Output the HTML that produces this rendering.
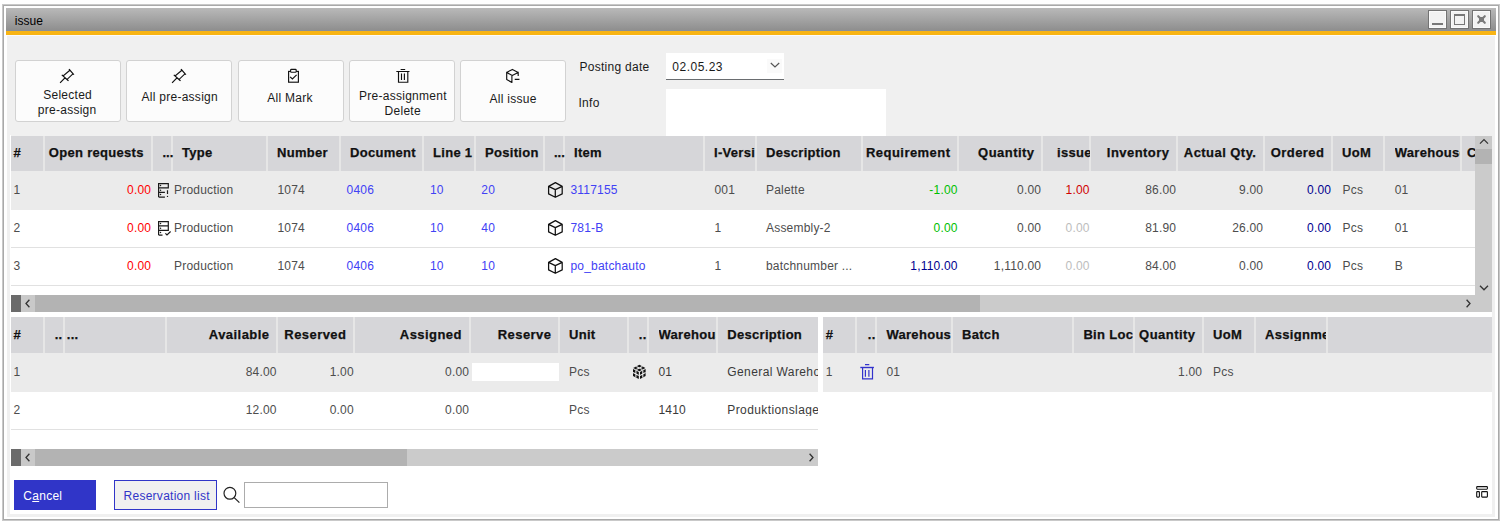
<!DOCTYPE html><html><head><meta charset="utf-8"><style>html,body{margin:0;padding:0;background:#fff;width:1502px;height:523px;overflow:hidden;position:relative;font-family:"Liberation Sans",sans-serif}body div{position:absolute;box-sizing:border-box}.t{white-space:pre}.h{-webkit-text-stroke:0.25px #111}</style></head><body>
<div style="left:2px;top:4px;width:1498px;height:517px;background:#fff;border:1px solid #c9c9c9;"></div>
<div style="left:3px;top:5px;width:1496px;height:515px;background:#fff;border:1px solid #a9a9a9;"></div>
<div style="left:7px;top:35px;width:1488px;height:482px;background:#f0f0f0;"></div>
<div style="left:6px;top:8px;width:1490px;height:23px;background:linear-gradient(#b9b9b9,#8d8d8d);"></div>
<div style="left:6px;top:30px;width:1490px;height:1px;background:#8a8f98;"></div>
<div style="left:6px;top:31px;width:1490px;height:4px;background:#f8b414;"></div>
<div style="left:7px;top:35px;width:1488px;height:1px;background:#fbfbfb;"></div>
<div class="t" style="left:14.8px;top:15px;font-size:12px;line-height:12px;color:#000;font-weight:normal;letter-spacing:0px;">issue</div>
<div style="left:1428px;top:10px;width:19px;height:19px;background:#f2f2f2;border:1px solid #737373;box-shadow:inset 0 0 0 1px #fafafa;"></div>
<div style="left:1450px;top:10px;width:19px;height:19px;background:#f2f2f2;border:1px solid #737373;box-shadow:inset 0 0 0 1px #fafafa;"></div>
<div style="left:1472px;top:10px;width:19px;height:19px;background:#f2f2f2;border:1px solid #737373;box-shadow:inset 0 0 0 1px #fafafa;"></div>
<div style="left:1432px;top:23px;width:11px;height:2px;background:#777;"></div>
<div style="left:1454px;top:14px;width:11px;height:11px;background:transparent;border:1px solid #777;border-top:2px solid #777;"></div>
<svg style="position:absolute;left:1472px;top:10px" width="19" height="19" viewBox="0 0 19 19"><path d="M6.2 6.2 L12.8 12.8 M12.8 6.2 L6.2 12.8" stroke="#7a7a7a" stroke-width="2.1" stroke-linecap="round"/><rect x="7" y="7" width="5" height="5" fill="#7a7a7a"/></svg>
<div style="left:15px;top:60px;width:106px;height:62px;background:#fcfcfc;border:1px solid #d2d2d2;border-radius:3px;"></div>
<div style="left:126px;top:60px;width:106px;height:62px;background:#fcfcfc;border:1px solid #d2d2d2;border-radius:3px;"></div>
<div style="left:238px;top:60px;width:106px;height:62px;background:#fcfcfc;border:1px solid #d2d2d2;border-radius:3px;"></div>
<div style="left:349px;top:60px;width:106px;height:62px;background:#fcfcfc;border:1px solid #d2d2d2;border-radius:3px;"></div>
<div style="left:460px;top:60px;width:106px;height:62px;background:#fcfcfc;border:1px solid #d2d2d2;border-radius:3px;"></div>
<svg style="position:absolute;left:55px;top:64px" width="25" height="25" viewBox="0 0 25 25"><g fill="none" stroke="#111" stroke-width="1.15" stroke-linecap="square"><path d="M7.2 11.2 L13.1 16.5 M8.4 11.7 L14.3 6.7 M12.2 15.3 L17.9 9.8 M14.3 5.5 L18.6 10.3 M5.5 18.4 L9.8 14"/></g></svg>
<svg style="position:absolute;left:167px;top:64px" width="25" height="25" viewBox="0 0 25 25"><g fill="none" stroke="#111" stroke-width="1.15" stroke-linecap="square"><path d="M7.2 11.2 L13.1 16.5 M8.4 11.7 L14.3 6.7 M12.2 15.3 L17.9 9.8 M14.3 5.5 L18.6 10.3 M5.5 18.4 L9.8 14"/></g></svg>
<svg style="position:absolute;left:280px;top:64px" width="25" height="25" viewBox="0 0 25 25"><g fill="none" stroke="#111" stroke-width="1.15" stroke-linecap="square"><rect x="8.6" y="7.4" width="9.8" height="10.8"/><rect x="10.6" y="5.4" width="5.6" height="2.8" rx="0.8" fill="#fcfcfc"/><path d="M10.5 13.3 L12.4 15 L16.2 11.2"/></g></svg>
<svg style="position:absolute;left:390px;top:64px" width="25" height="25" viewBox="0 0 25 25"><g fill="none" stroke="#111" stroke-width="1.15" stroke-linecap="square"><path d="M6.9 7.5 H18.9 M11.2 5.5 H14.6 M11.5 10 V15.5 M14.4 10 V15.5"/><path d="M8.5 7.9 V18.2 H17.8 V7.9"/></g></svg>
<svg style="position:absolute;left:500px;top:64px" width="25" height="25" viewBox="0 0 25 25"><g fill="none" stroke="#111" stroke-width="1.15" stroke-linecap="square" stroke-linejoin="round"><path d="M6.7 8.4 L12.4 5.4 L18.2 8.4 L12.2 11.5 Z M6.7 8.4 V15.5 L11.9 18.4 V11.5 M18.2 8.4 V11.5 M15.3 15.4 H18.9"/></g></svg>
<div class="t" style="left:-32.365px;top:89px;width:200px;text-align:center;font-size:12px;line-height:12px;color:#1a1a1a;font-weight:normal;letter-spacing:0.27px;">Selected</div>
<div class="t" style="left:-32.865px;top:103.5px;width:200px;text-align:center;font-size:12px;line-height:12px;color:#1a1a1a;font-weight:normal;letter-spacing:0.27px;">pre-assign</div>
<div class="t" style="left:79.735px;top:91px;width:200px;text-align:center;font-size:12px;line-height:12px;color:#1a1a1a;font-weight:normal;letter-spacing:0.27px;">All pre-assign</div>
<div class="t" style="left:189.935px;top:92px;width:200px;text-align:center;font-size:12px;line-height:12px;color:#1a1a1a;font-weight:normal;letter-spacing:0.27px;">All Mark</div>
<div class="t" style="left:302.935px;top:90px;width:200px;text-align:center;font-size:12px;line-height:12px;color:#1a1a1a;font-weight:normal;letter-spacing:0.27px;">Pre-assignment</div>
<div class="t" style="left:302.735px;top:105px;width:200px;text-align:center;font-size:12px;line-height:12px;color:#1a1a1a;font-weight:normal;letter-spacing:0.27px;">Delete</div>
<div class="t" style="left:413.135px;top:93px;width:200px;text-align:center;font-size:12px;line-height:12px;color:#1a1a1a;font-weight:normal;letter-spacing:0.27px;">All issue</div>
<div class="t" style="left:579.5px;top:61px;font-size:12px;line-height:12px;color:#1a1a1a;font-weight:normal;letter-spacing:0.27px;">Posting date</div>
<div class="t" style="left:578.5px;top:97px;font-size:12px;line-height:12px;color:#1a1a1a;font-weight:normal;letter-spacing:0.27px;">Info</div>
<div style="left:666px;top:53px;width:118px;height:27px;background:#fff;border-bottom:1px solid #6a6d70;"></div>
<div style="left:767px;top:59px;width:15px;height:14px;background:#fafafa;"></div>
<div class="t" style="left:672.3px;top:61px;font-size:12px;line-height:12px;color:#1a1a1a;font-weight:normal;letter-spacing:0.5px;">02.05.23</div>
<svg style="position:absolute;left:768px;top:60px" width="14" height="10" viewBox="0 0 14 10"><path d="M2.8 3 L7 7 L11.2 3" fill="none" stroke="#555" stroke-width="1.2"/></svg>
<div style="left:666px;top:89px;width:220px;height:47px;background:#fff;"></div>
<div style="left:10px;top:136px;width:1482px;height:378px;background:#fff;"></div>
<div style="left:10px;top:135px;width:1px;height:1px;background:#fff;"></div>
<div style="left:11px;top:136px;width:1464px;height:35px;background:#d6d6d9;"></div>
<div style="left:43px;top:136px;width:2px;height:35px;background:#e6e6e6;"></div>
<div style="left:151px;top:136px;width:2px;height:35px;background:#e6e6e6;"></div>
<div style="left:171px;top:136px;width:2px;height:35px;background:#e6e6e6;"></div>
<div style="left:266px;top:136px;width:2px;height:35px;background:#e6e6e6;"></div>
<div style="left:339px;top:136px;width:2px;height:35px;background:#e6e6e6;"></div>
<div style="left:422px;top:136px;width:2px;height:35px;background:#e6e6e6;"></div>
<div style="left:474px;top:136px;width:2px;height:35px;background:#e6e6e6;"></div>
<div style="left:543px;top:136px;width:2px;height:35px;background:#e6e6e6;"></div>
<div style="left:563px;top:136px;width:2px;height:35px;background:#e6e6e6;"></div>
<div style="left:703px;top:136px;width:2px;height:35px;background:#e6e6e6;"></div>
<div style="left:755px;top:136px;width:2px;height:35px;background:#e6e6e6;"></div>
<div style="left:861px;top:136px;width:2px;height:35px;background:#e6e6e6;"></div>
<div style="left:957px;top:136px;width:2px;height:35px;background:#e6e6e6;"></div>
<div style="left:1041px;top:136px;width:2px;height:35px;background:#e6e6e6;"></div>
<div style="left:1089px;top:136px;width:2px;height:35px;background:#e6e6e6;"></div>
<div style="left:1176px;top:136px;width:2px;height:35px;background:#e6e6e6;"></div>
<div style="left:1263px;top:136px;width:2px;height:35px;background:#e6e6e6;"></div>
<div style="left:1331px;top:136px;width:2px;height:35px;background:#e6e6e6;"></div>
<div style="left:1383px;top:136px;width:2px;height:35px;background:#e6e6e6;"></div>
<div style="left:1460px;top:136px;width:2px;height:35px;background:#e6e6e6;"></div>
<div style="left:11px;top:171px;width:1464px;height:39px;background:#ebebeb;"></div>
<div style="left:11px;top:247px;width:1464px;height:1px;background:#e1e1e1;"></div>
<div style="left:11px;top:285px;width:1464px;height:1px;background:#e1e1e1;"></div>
<div class="t h" style="left:13.5px;top:146px;font-size:13px;line-height:13px;color:#111;font-weight:bold;letter-spacing:0.3px;">#</div>
<div class="t h" style="left:48.8px;top:146px;font-size:13px;line-height:13px;color:#111;font-weight:bold;letter-spacing:0.3px;">Open requests</div>
<div class="t h" style="left:162.5px;top:146px;font-size:13px;line-height:13px;color:#111;font-weight:bold;letter-spacing:0px;">...</div>
<div class="t h" style="left:182px;top:146px;font-size:13px;line-height:13px;color:#111;font-weight:bold;letter-spacing:0.3px;">Type</div>
<div class="t h" style="left:277px;top:146px;font-size:13px;line-height:13px;color:#111;font-weight:bold;letter-spacing:0.3px;">Number</div>
<div class="t h" style="left:350px;top:146px;font-size:13px;line-height:13px;color:#111;font-weight:bold;letter-spacing:0.3px;">Document</div>
<div class="t h" style="left:433px;top:146px;font-size:13px;line-height:13px;color:#111;font-weight:bold;letter-spacing:0.3px;">Line 1</div>
<div class="t h" style="left:485px;top:146px;font-size:13px;line-height:13px;color:#111;font-weight:bold;letter-spacing:0.3px;">Position</div>
<div class="t h" style="left:554px;top:146px;font-size:13px;line-height:13px;color:#111;font-weight:bold;letter-spacing:0px;">...</div>
<div class="t h" style="left:574px;top:146px;font-size:13px;line-height:13px;color:#111;font-weight:bold;letter-spacing:0.3px;">Item</div>
<div class="t h" style="left:714px;top:146px;font-size:13px;line-height:13px;color:#111;font-weight:bold;letter-spacing:0.3px;width:41px;overflow:hidden;">I-Version</div>
<div class="t h" style="left:766px;top:146px;font-size:13px;line-height:13px;color:#111;font-weight:bold;letter-spacing:0.3px;">Description</div>
<div class="t h" style="left:650.45px;top:146px;width:300px;text-align:right;font-size:13px;line-height:13px;color:#111;font-weight:bold;letter-spacing:0.45px;margin-right:0;">Requirement</div>
<div class="t h" style="left:734.45px;top:146px;width:300px;text-align:right;font-size:13px;line-height:13px;color:#111;font-weight:bold;letter-spacing:0.45px;margin-right:0;">Quantity</div>
<div class="t h" style="left:1057px;top:146px;font-size:13px;line-height:13px;color:#111;font-weight:bold;letter-spacing:0.3px;width:33px;overflow:hidden;">issue</div>
<div class="t h" style="left:869.45px;top:146px;width:300px;text-align:right;font-size:13px;line-height:13px;color:#111;font-weight:bold;letter-spacing:0.45px;margin-right:0;">Inventory</div>
<div class="t h" style="left:956.45px;top:146px;width:300px;text-align:right;font-size:13px;line-height:13px;color:#111;font-weight:bold;letter-spacing:0.45px;margin-right:0;">Actual Qty.</div>
<div class="t h" style="left:1024.45px;top:146px;width:300px;text-align:right;font-size:13px;line-height:13px;color:#111;font-weight:bold;letter-spacing:0.45px;margin-right:0;">Ordered</div>
<div class="t h" style="left:1342px;top:146px;font-size:13px;line-height:13px;color:#111;font-weight:bold;letter-spacing:0.3px;">UoM</div>
<div class="t h" style="left:1394.7px;top:146px;font-size:13px;line-height:13px;color:#111;font-weight:bold;letter-spacing:0.3px;width:65.29999999999995px;overflow:hidden;">Warehouse</div>
<div class="t h" style="left:1467px;top:146px;font-size:13px;line-height:13px;color:#111;font-weight:bold;letter-spacing:0.3px;width:8px;overflow:hidden;">C</div>
<div class="t" style="left:13.5px;top:184px;font-size:12px;line-height:12px;color:#4d4d4d;font-weight:normal;letter-spacing:0.2px;">1</div>
<div class="t" style="left:-148.8px;top:184px;width:300px;text-align:right;font-size:12px;line-height:12px;color:#ff0000;font-weight:normal;letter-spacing:0.2px;margin-right:0;">0.00</div>
<svg style="position:absolute;left:152px;top:178px" width="25" height="25" viewBox="0 0 25 25"><g fill="none" stroke="#1a1a1a" stroke-width="1.2"><path d="M6.6 19.1 V5.6 H16.3 V9.8 H6.6 M6.6 14.3 H12.9 M6.6 19.1 H12.9 M15.5 12.2 V16"/></g><circle cx="15.5" cy="18.4" r="0.7" fill="#1a1a1a" stroke="none"/><circle cx="8.5" cy="7.5" r="0.75" fill="#1a1a1a" stroke="none"/><circle cx="8.5" cy="12.2" r="0.75" fill="#1a1a1a" stroke="none"/><circle cx="8.5" cy="16.5" r="0.75" fill="#1a1a1a" stroke="none"/></svg>
<div class="t" style="left:174px;top:184px;font-size:12px;line-height:12px;color:#4d4d4d;font-weight:normal;letter-spacing:0.2px;">Production</div>
<div class="t" style="left:277.5px;top:184px;font-size:12px;line-height:12px;color:#4d4d4d;font-weight:normal;letter-spacing:0.2px;">1074</div>
<div class="t" style="left:346.6px;top:184px;font-size:12px;line-height:12px;color:#4141f5;font-weight:normal;letter-spacing:0.2px;">0406</div>
<div class="t" style="left:430px;top:184px;font-size:12px;line-height:12px;color:#4141f5;font-weight:normal;letter-spacing:0.2px;">10</div>
<div class="t" style="left:481.3px;top:184px;font-size:12px;line-height:12px;color:#4141f5;font-weight:normal;letter-spacing:0.2px;">20</div>
<svg style="position:absolute;left:543px;top:178px" width="25" height="25" viewBox="0 0 25 25"><g fill="none" stroke="#111" stroke-width="1.25" stroke-linejoin="round"><path d="M12.4 4.6 L19.2 8.4 V15.9 L12.3 19.3 L5.6 15.9 V8.4 Z M5.6 8.4 L12.3 11.6 L19.2 8.4 M12.3 11.6 V19.3"/></g></svg>
<div class="t" style="left:570.5px;top:184px;font-size:12px;line-height:12px;color:#4141f5;font-weight:normal;letter-spacing:0.2px;">3117155</div>
<div class="t" style="left:714.5px;top:184px;font-size:12px;line-height:12px;color:#4d4d4d;font-weight:normal;letter-spacing:0.2px;">001</div>
<div class="t" style="left:766px;top:184px;font-size:12px;line-height:12px;color:#4d4d4d;font-weight:normal;letter-spacing:0.2px;">Palette</div>
<div class="t" style="left:657.7px;top:184px;width:300px;text-align:right;font-size:12px;line-height:12px;color:#00c000;font-weight:normal;letter-spacing:0.2px;margin-right:0;">-1.00</div>
<div class="t" style="left:741.2px;top:184px;width:300px;text-align:right;font-size:12px;line-height:12px;color:#4d4d4d;font-weight:normal;letter-spacing:0.2px;margin-right:0;">0.00</div>
<div class="t" style="left:789.7px;top:184px;width:300px;text-align:right;font-size:12px;line-height:12px;color:#d00000;font-weight:normal;letter-spacing:0.2px;margin-right:0;">1.00</div>
<div class="t" style="left:876.2px;top:184px;width:300px;text-align:right;font-size:12px;line-height:12px;color:#4d4d4d;font-weight:normal;letter-spacing:0.2px;margin-right:0;">86.00</div>
<div class="t" style="left:963.2px;top:184px;width:300px;text-align:right;font-size:12px;line-height:12px;color:#4d4d4d;font-weight:normal;letter-spacing:0.2px;margin-right:0;">9.00</div>
<div class="t" style="left:1031.2px;top:184px;width:300px;text-align:right;font-size:12px;line-height:12px;color:#00008f;font-weight:normal;letter-spacing:0.2px;margin-right:0;">0.00</div>
<div class="t" style="left:1342.5px;top:184px;font-size:12px;line-height:12px;color:#4d4d4d;font-weight:normal;letter-spacing:0.2px;">Pcs</div>
<div class="t" style="left:1394.7px;top:184px;font-size:12px;line-height:12px;color:#4d4d4d;font-weight:normal;letter-spacing:0.2px;">01</div>
<div class="t" style="left:13.5px;top:222px;font-size:12px;line-height:12px;color:#4d4d4d;font-weight:normal;letter-spacing:0.2px;">2</div>
<div class="t" style="left:-148.8px;top:222px;width:300px;text-align:right;font-size:12px;line-height:12px;color:#ff0000;font-weight:normal;letter-spacing:0.2px;margin-right:0;">0.00</div>
<svg style="position:absolute;left:152px;top:216px" width="25" height="25" viewBox="0 0 25 25"><g fill="none" stroke="#1a1a1a" stroke-width="1.2"><path d="M6.6 19.1 V5.6 H16.3 V14.3 H6.6 M6.6 9.8 H16.3 M6.6 19.1 H10.5 M13.4 17.4 L15 19 L18.6 15.5"/></g><circle cx="8.5" cy="7.5" r="0.75" fill="#1a1a1a" stroke="none"/><circle cx="8.5" cy="12.2" r="0.75" fill="#1a1a1a" stroke="none"/><circle cx="8.5" cy="16.5" r="0.75" fill="#1a1a1a" stroke="none"/></svg>
<div class="t" style="left:174px;top:222px;font-size:12px;line-height:12px;color:#4d4d4d;font-weight:normal;letter-spacing:0.2px;">Production</div>
<div class="t" style="left:277.5px;top:222px;font-size:12px;line-height:12px;color:#4d4d4d;font-weight:normal;letter-spacing:0.2px;">1074</div>
<div class="t" style="left:346.6px;top:222px;font-size:12px;line-height:12px;color:#4141f5;font-weight:normal;letter-spacing:0.2px;">0406</div>
<div class="t" style="left:430px;top:222px;font-size:12px;line-height:12px;color:#4141f5;font-weight:normal;letter-spacing:0.2px;">10</div>
<div class="t" style="left:481.3px;top:222px;font-size:12px;line-height:12px;color:#4141f5;font-weight:normal;letter-spacing:0.2px;">40</div>
<svg style="position:absolute;left:543px;top:216px" width="25" height="25" viewBox="0 0 25 25"><g fill="none" stroke="#111" stroke-width="1.25" stroke-linejoin="round"><path d="M12.4 4.6 L19.2 8.4 V15.9 L12.3 19.3 L5.6 15.9 V8.4 Z M5.6 8.4 L12.3 11.6 L19.2 8.4 M12.3 11.6 V19.3"/></g></svg>
<div class="t" style="left:570.5px;top:222px;font-size:12px;line-height:12px;color:#4141f5;font-weight:normal;letter-spacing:0.2px;">781-B</div>
<div class="t" style="left:714.5px;top:222px;font-size:12px;line-height:12px;color:#4d4d4d;font-weight:normal;letter-spacing:0.2px;">1</div>
<div class="t" style="left:766px;top:222px;font-size:12px;line-height:12px;color:#4d4d4d;font-weight:normal;letter-spacing:0.2px;">Assembly-2</div>
<div class="t" style="left:657.7px;top:222px;width:300px;text-align:right;font-size:12px;line-height:12px;color:#00c000;font-weight:normal;letter-spacing:0.2px;margin-right:0;">0.00</div>
<div class="t" style="left:741.2px;top:222px;width:300px;text-align:right;font-size:12px;line-height:12px;color:#4d4d4d;font-weight:normal;letter-spacing:0.2px;margin-right:0;">0.00</div>
<div class="t" style="left:789.7px;top:222px;width:300px;text-align:right;font-size:12px;line-height:12px;color:#bdbdbd;font-weight:normal;letter-spacing:0.2px;margin-right:0;">0.00</div>
<div class="t" style="left:876.2px;top:222px;width:300px;text-align:right;font-size:12px;line-height:12px;color:#4d4d4d;font-weight:normal;letter-spacing:0.2px;margin-right:0;">81.90</div>
<div class="t" style="left:963.2px;top:222px;width:300px;text-align:right;font-size:12px;line-height:12px;color:#4d4d4d;font-weight:normal;letter-spacing:0.2px;margin-right:0;">26.00</div>
<div class="t" style="left:1031.2px;top:222px;width:300px;text-align:right;font-size:12px;line-height:12px;color:#00008f;font-weight:normal;letter-spacing:0.2px;margin-right:0;">0.00</div>
<div class="t" style="left:1342.5px;top:222px;font-size:12px;line-height:12px;color:#4d4d4d;font-weight:normal;letter-spacing:0.2px;">Pcs</div>
<div class="t" style="left:1394.7px;top:222px;font-size:12px;line-height:12px;color:#4d4d4d;font-weight:normal;letter-spacing:0.2px;">01</div>
<div class="t" style="left:13.5px;top:260px;font-size:12px;line-height:12px;color:#4d4d4d;font-weight:normal;letter-spacing:0.2px;">3</div>
<div class="t" style="left:-148.8px;top:260px;width:300px;text-align:right;font-size:12px;line-height:12px;color:#ff0000;font-weight:normal;letter-spacing:0.2px;margin-right:0;">0.00</div>
<div class="t" style="left:174px;top:260px;font-size:12px;line-height:12px;color:#4d4d4d;font-weight:normal;letter-spacing:0.2px;">Production</div>
<div class="t" style="left:277.5px;top:260px;font-size:12px;line-height:12px;color:#4d4d4d;font-weight:normal;letter-spacing:0.2px;">1074</div>
<div class="t" style="left:346.6px;top:260px;font-size:12px;line-height:12px;color:#4141f5;font-weight:normal;letter-spacing:0.2px;">0406</div>
<div class="t" style="left:430px;top:260px;font-size:12px;line-height:12px;color:#4141f5;font-weight:normal;letter-spacing:0.2px;">10</div>
<div class="t" style="left:481.3px;top:260px;font-size:12px;line-height:12px;color:#4141f5;font-weight:normal;letter-spacing:0.2px;">10</div>
<svg style="position:absolute;left:543px;top:254px" width="25" height="25" viewBox="0 0 25 25"><g fill="none" stroke="#111" stroke-width="1.25" stroke-linejoin="round"><path d="M12.4 4.6 L19.2 8.4 V15.9 L12.3 19.3 L5.6 15.9 V8.4 Z M5.6 8.4 L12.3 11.6 L19.2 8.4 M12.3 11.6 V19.3"/></g></svg>
<div class="t" style="left:570.5px;top:260px;font-size:12px;line-height:12px;color:#4141f5;font-weight:normal;letter-spacing:0.2px;">po_batchauto</div>
<div class="t" style="left:714.5px;top:260px;font-size:12px;line-height:12px;color:#4d4d4d;font-weight:normal;letter-spacing:0.2px;">1</div>
<div class="t" style="left:766px;top:260px;font-size:12px;line-height:12px;color:#4d4d4d;font-weight:normal;letter-spacing:0.2px;">batchnumber ...</div>
<div class="t" style="left:657.7px;top:260px;width:300px;text-align:right;font-size:12px;line-height:12px;color:#00008f;font-weight:normal;letter-spacing:0.2px;margin-right:0;">1,110.00</div>
<div class="t" style="left:741.2px;top:260px;width:300px;text-align:right;font-size:12px;line-height:12px;color:#4d4d4d;font-weight:normal;letter-spacing:0.2px;margin-right:0;">1,110.00</div>
<div class="t" style="left:789.7px;top:260px;width:300px;text-align:right;font-size:12px;line-height:12px;color:#bdbdbd;font-weight:normal;letter-spacing:0.2px;margin-right:0;">0.00</div>
<div class="t" style="left:876.2px;top:260px;width:300px;text-align:right;font-size:12px;line-height:12px;color:#4d4d4d;font-weight:normal;letter-spacing:0.2px;margin-right:0;">84.00</div>
<div class="t" style="left:963.2px;top:260px;width:300px;text-align:right;font-size:12px;line-height:12px;color:#4d4d4d;font-weight:normal;letter-spacing:0.2px;margin-right:0;">0.00</div>
<div class="t" style="left:1031.2px;top:260px;width:300px;text-align:right;font-size:12px;line-height:12px;color:#00008f;font-weight:normal;letter-spacing:0.2px;margin-right:0;">0.00</div>
<div class="t" style="left:1342.5px;top:260px;font-size:12px;line-height:12px;color:#4d4d4d;font-weight:normal;letter-spacing:0.2px;">Pcs</div>
<div class="t" style="left:1394.7px;top:260px;font-size:12px;line-height:12px;color:#4d4d4d;font-weight:normal;letter-spacing:0.2px;">B</div>
<div style="left:11px;top:295px;width:1464px;height:17px;background:#cbcbcb;"></div>
<div style="left:11px;top:295px;width:10px;height:17px;background:#6b6b6b;"></div>
<div style="left:21px;top:295px;width:14px;height:17px;background:#c9c9c9;"></div>
<div style="left:35px;top:295px;width:945px;height:17px;background:#b3b3b3;"></div>
<svg style="position:absolute;left:24px;top:299px" width="8" height="9" viewBox="0 0 8 9"><path d="M5.4 0.8 L2 4.5 L5.4 8.2" fill="none" stroke="#333" stroke-width="1.3"/></svg>
<svg style="position:absolute;left:1464px;top:299px" width="8" height="9" viewBox="0 0 8 9"><path d="M2.6 0.8 L6 4.5 L2.6 8.2" fill="none" stroke="#333" stroke-width="1.3"/></svg>
<div style="left:1475px;top:136px;width:17px;height:176px;background:#cbcbcb;"></div>
<div style="left:1475px;top:136px;width:17px;height:13px;background:#c9c9c9;"></div>
<div style="left:1475px;top:149px;width:17px;height:15px;background:#b3b3b3;"></div>
<svg style="position:absolute;left:1479px;top:137px" width="10" height="9" viewBox="0 0 10 9"><path d="M1 6.6 L5 2.6 L9 6.6" fill="none" stroke="#333" stroke-width="1.3"/></svg>
<svg style="position:absolute;left:1479px;top:283px" width="10" height="9" viewBox="0 0 10 9"><path d="M1 2.8 L5 6.8 L9 2.8" fill="none" stroke="#333" stroke-width="1.3"/></svg>
<div style="left:11px;top:317px;width:807px;height:36px;background:#d6d6d9;"></div>
<div style="left:43px;top:317px;width:2px;height:36px;background:#e6e6e6;"></div>
<div style="left:63px;top:317px;width:2px;height:36px;background:#e6e6e6;"></div>
<div style="left:165px;top:317px;width:2px;height:36px;background:#e6e6e6;"></div>
<div style="left:276px;top:317px;width:2px;height:36px;background:#e6e6e6;"></div>
<div style="left:353px;top:317px;width:2px;height:36px;background:#e6e6e6;"></div>
<div style="left:469px;top:317px;width:2px;height:36px;background:#e6e6e6;"></div>
<div style="left:558px;top:317px;width:2px;height:36px;background:#e6e6e6;"></div>
<div style="left:627px;top:317px;width:2px;height:36px;background:#e6e6e6;"></div>
<div style="left:647px;top:317px;width:2px;height:36px;background:#e6e6e6;"></div>
<div style="left:716px;top:317px;width:2px;height:36px;background:#e6e6e6;"></div>
<div style="left:11px;top:353px;width:807px;height:39px;background:#ebebeb;"></div>
<div style="left:11px;top:429px;width:807px;height:1px;background:#e1e1e1;"></div>
<div class="t h" style="left:13.5px;top:328px;font-size:13px;line-height:13px;color:#111;font-weight:bold;letter-spacing:0.3px;">#</div>
<div class="t h" style="left:54.7px;top:328px;font-size:13px;line-height:13px;color:#111;font-weight:bold;letter-spacing:0.3px;">..</div>
<div class="t h" style="left:66.8px;top:328px;font-size:13px;line-height:13px;color:#111;font-weight:bold;letter-spacing:0.3px;">...</div>
<div class="t h" style="left:-30.55px;top:328px;width:300px;text-align:right;font-size:13px;line-height:13px;color:#111;font-weight:bold;letter-spacing:0.45px;margin-right:0;">Available</div>
<div class="t h" style="left:46.45px;top:328px;width:300px;text-align:right;font-size:13px;line-height:13px;color:#111;font-weight:bold;letter-spacing:0.45px;margin-right:0;">Reserved</div>
<div class="t h" style="left:161.95px;top:328px;width:300px;text-align:right;font-size:13px;line-height:13px;color:#111;font-weight:bold;letter-spacing:0.45px;margin-right:0;">Assigned</div>
<div class="t h" style="left:251.45px;top:328px;width:300px;text-align:right;font-size:13px;line-height:13px;color:#111;font-weight:bold;letter-spacing:0.45px;margin-right:0;">Reserve</div>
<div class="t h" style="left:569px;top:328px;font-size:13px;line-height:13px;color:#111;font-weight:bold;letter-spacing:0.3px;">Unit</div>
<div class="t h" style="left:346.95px;top:328px;width:300px;text-align:right;font-size:13px;line-height:13px;color:#111;font-weight:bold;letter-spacing:0.45px;margin-right:0;">..</div>
<div class="t h" style="left:658.5px;top:328px;font-size:13px;line-height:13px;color:#111;font-weight:bold;letter-spacing:0.3px;width:57.5px;overflow:hidden;">Warehouse</div>
<div class="t h" style="left:727.3px;top:328px;font-size:13px;line-height:13px;color:#111;font-weight:bold;letter-spacing:0.3px;">Description</div>
<div class="t" style="left:13.5px;top:366px;font-size:12px;line-height:12px;color:#4d4d4d;font-weight:normal;letter-spacing:0.2px;">1</div>
<div class="t" style="left:-23.3px;top:366px;width:300px;text-align:right;font-size:12px;line-height:12px;color:#4d4d4d;font-weight:normal;letter-spacing:0.2px;margin-right:0;">84.00</div>
<div class="t" style="left:53.800000000000026px;top:366px;width:300px;text-align:right;font-size:12px;line-height:12px;color:#4d4d4d;font-weight:normal;letter-spacing:0.2px;margin-right:0;">1.00</div>
<div class="t" style="left:169.2px;top:366px;width:300px;text-align:right;font-size:12px;line-height:12px;color:#4d4d4d;font-weight:normal;letter-spacing:0.2px;margin-right:0;">0.00</div>
<div class="t" style="left:569px;top:366px;font-size:12px;line-height:12px;color:#4d4d4d;font-weight:normal;letter-spacing:0.2px;">Pcs</div>
<div class="t" style="left:658.5px;top:366px;font-size:12px;line-height:12px;color:#3a3a3a;font-weight:normal;letter-spacing:0.2px;">01</div>
<div class="t" style="left:727.3px;top:366px;font-size:12px;line-height:12px;color:#3a3a3a;font-weight:normal;letter-spacing:0.4px;width:90.70000000000005px;overflow:hidden;">General Warehouse</div>
<div class="t" style="left:13.5px;top:404px;font-size:12px;line-height:12px;color:#4d4d4d;font-weight:normal;letter-spacing:0.2px;">2</div>
<div class="t" style="left:-23.3px;top:404px;width:300px;text-align:right;font-size:12px;line-height:12px;color:#4d4d4d;font-weight:normal;letter-spacing:0.2px;margin-right:0;">12.00</div>
<div class="t" style="left:53.800000000000026px;top:404px;width:300px;text-align:right;font-size:12px;line-height:12px;color:#4d4d4d;font-weight:normal;letter-spacing:0.2px;margin-right:0;">0.00</div>
<div class="t" style="left:169.2px;top:404px;width:300px;text-align:right;font-size:12px;line-height:12px;color:#4d4d4d;font-weight:normal;letter-spacing:0.2px;margin-right:0;">0.00</div>
<div class="t" style="left:569px;top:404px;font-size:12px;line-height:12px;color:#4d4d4d;font-weight:normal;letter-spacing:0.2px;">Pcs</div>
<div class="t" style="left:658.5px;top:404px;font-size:12px;line-height:12px;color:#3a3a3a;font-weight:normal;letter-spacing:0.2px;">1410</div>
<div class="t" style="left:727.3px;top:404px;font-size:12px;line-height:12px;color:#3a3a3a;font-weight:normal;letter-spacing:0.4px;width:90.70000000000005px;overflow:hidden;">Produktionslager</div>
<div style="left:472px;top:363px;width:87px;height:18px;background:#fff;"></div>
<svg style="position:absolute;left:627px;top:360px" width="25" height="25" viewBox="0 0 25 25"><g stroke="none" fill="#111"><path d="M12.4 4.8 L18.4 8.1 L12.4 11.2 L6.2 8.1 Z"/><path d="M6 9 L11.8 12 V19 L6 16 Z"/><path d="M18.6 9 L13 12 V19 L18.6 16 Z"/></g><g stroke="#ebebeb" stroke-width="1.1" fill="none"><path d="M9.3 6.5 L15.4 9.6 M15.4 6.5 L9.3 9.6"/><path d="M8.9 10.3 V17.6 M6 12.6 L11.8 15.6"/><path d="M15.8 10.3 V17.6 M18.6 12.6 L13 15.6"/></g></svg>
<div style="left:11px;top:449px;width:807px;height:17px;background:#cbcbcb;"></div>
<div style="left:11px;top:449px;width:10px;height:17px;background:#6b6b6b;"></div>
<div style="left:21px;top:449px;width:14px;height:17px;background:#c9c9c9;"></div>
<div style="left:35px;top:449px;width:372px;height:17px;background:#b3b3b3;"></div>
<svg style="position:absolute;left:24px;top:453px" width="8" height="9" viewBox="0 0 8 9"><path d="M5.4 0.8 L2 4.5 L5.4 8.2" fill="none" stroke="#333" stroke-width="1.3"/></svg>
<svg style="position:absolute;left:807px;top:453px" width="8" height="9" viewBox="0 0 8 9"><path d="M2.6 0.8 L6 4.5 L2.6 8.2" fill="none" stroke="#333" stroke-width="1.3"/></svg>
<div style="left:823px;top:317px;width:669px;height:36px;background:#d6d6d9;"></div>
<div style="left:855px;top:317px;width:2px;height:36px;background:#e6e6e6;"></div>
<div style="left:875px;top:317px;width:2px;height:36px;background:#e6e6e6;"></div>
<div style="left:951px;top:317px;width:2px;height:36px;background:#e6e6e6;"></div>
<div style="left:1072px;top:317px;width:2px;height:36px;background:#e6e6e6;"></div>
<div style="left:1133px;top:317px;width:2px;height:36px;background:#e6e6e6;"></div>
<div style="left:1202px;top:317px;width:2px;height:36px;background:#e6e6e6;"></div>
<div style="left:1254px;top:317px;width:2px;height:36px;background:#e6e6e6;"></div>
<div style="left:1326px;top:317px;width:2px;height:36px;background:#e6e6e6;"></div>
<div style="left:823px;top:353px;width:669px;height:39px;background:#ebebeb;"></div>
<div class="t h" style="left:825.7px;top:328px;font-size:13px;line-height:13px;color:#111;font-weight:bold;letter-spacing:0.3px;">#</div>
<div class="t h" style="left:575.95px;top:328px;width:300px;text-align:right;font-size:13px;line-height:13px;color:#111;font-weight:bold;letter-spacing:0.45px;margin-right:0;">..</div>
<div class="t h" style="left:886.4px;top:328px;font-size:13px;line-height:13px;color:#111;font-weight:bold;letter-spacing:0.3px;width:64.60000000000002px;overflow:hidden;">Warehouse</div>
<div class="t h" style="left:962px;top:328px;font-size:13px;line-height:13px;color:#111;font-weight:bold;letter-spacing:0.3px;">Batch</div>
<div class="t h" style="left:1083.4px;top:328px;font-size:13px;line-height:13px;color:#111;font-weight:bold;letter-spacing:0.3px;width:49.59999999999991px;overflow:hidden;">Bin Location</div>
<div class="t h" style="left:895.45px;top:328px;width:300px;text-align:right;font-size:13px;line-height:13px;color:#111;font-weight:bold;letter-spacing:0.45px;margin-right:0;">Quantity</div>
<div class="t h" style="left:1213px;top:328px;font-size:13px;line-height:13px;color:#111;font-weight:bold;letter-spacing:0.3px;">UoM</div>
<div class="t h" style="left:1265px;top:328px;font-size:13px;line-height:13px;color:#111;font-weight:bold;letter-spacing:0.3px;width:61px;overflow:hidden;">Assignment</div>
<div class="t" style="left:825.7px;top:366px;font-size:12px;line-height:12px;color:#4d4d4d;font-weight:normal;letter-spacing:0.2px;">1</div>
<svg style="position:absolute;left:855px;top:360px" width="25" height="25" viewBox="0 0 25 25"><g fill="none" stroke="#3232cc" stroke-width="1.2"><path d="M5.3 7.5 H18.9" stroke-width="1.4"/><path d="M10 4.6 H14.3 M10.4 10 V16.7 M13.9 10 V16.7"/><path d="M7.6 7.6 V18.9 H17.5 V7.6"/></g></svg>
<div class="t" style="left:886.4px;top:366px;font-size:12px;line-height:12px;color:#4d4d4d;font-weight:normal;letter-spacing:0.2px;">01</div>
<div class="t" style="left:902.2px;top:366px;width:300px;text-align:right;font-size:12px;line-height:12px;color:#4d4d4d;font-weight:normal;letter-spacing:0.2px;margin-right:0;">1.00</div>
<div class="t" style="left:1213px;top:366px;font-size:12px;line-height:12px;color:#4d4d4d;font-weight:normal;letter-spacing:0.2px;">Pcs</div>
<div style="left:14px;top:480px;width:82px;height:30px;background:#3035c8;"></div>
<div class="t" style="left:23.3px;top:490px;font-size:12px;line-height:12px;color:#fff;font-weight:normal;letter-spacing:0.27px;">C<u>a</u>ncel</div>
<div style="left:114px;top:480px;width:103px;height:30px;background:#f0f0f0;border:1px solid #3035c8;"></div>
<div class="t" style="left:123.5px;top:490px;font-size:12px;line-height:12px;color:#3035c8;font-weight:normal;letter-spacing:0.27px;">Reservation list</div>
<svg style="position:absolute;left:220px;top:484px" width="24" height="22" viewBox="0 0 24 22"><circle cx="9.9" cy="9.3" r="5.9" fill="none" stroke="#222" stroke-width="1.2"/><path d="M14.2 13.6 L19.4 18.6" stroke="#222" stroke-width="1.3"/></svg>
<div style="left:244px;top:482px;width:144px;height:26px;background:#fff;border:1px solid #acacac;"></div>
<svg style="position:absolute;left:1470px;top:478px" width="25" height="25" viewBox="0 0 25 25"><g fill="none" stroke="#111" stroke-width="1.1"><rect x="6.7" y="8.6" width="10.7" height="2.6" rx="0.6"/><rect x="6.7" y="13.6" width="2.7" height="5.5" rx="0.6"/><rect x="11.7" y="13.6" width="5.7" height="5.5" rx="0.6"/></g></svg>
</body></html>
